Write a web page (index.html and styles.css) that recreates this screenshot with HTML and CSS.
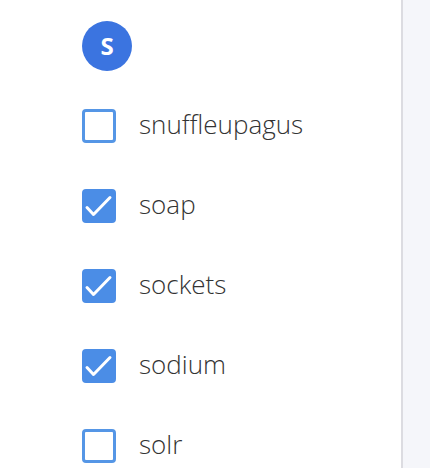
FILE: index.html
```html
<!DOCTYPE html>
<html>
<head>
<meta charset="utf-8">
<link rel="stylesheet" href="styles.css">
</head>
<body>
<div class="page">
  <div class="panel">
    <div class="avatar">S</div>
    <ul class="list">
      <li class="item"><span class="box"></span><span class="label">snuffleupagus</span></li>
      <li class="item"><span class="box checked"><svg viewBox="0 0 34 34" width="34" height="34"><path d="M5 18.5 L11.5 25.5 L28 8.5" fill="none" stroke="#fff" stroke-width="3" stroke-linecap="round" stroke-linejoin="round"/></svg></span><span class="label">soap</span></li>
      <li class="item"><span class="box checked"><svg viewBox="0 0 34 34" width="34" height="34"><path d="M5 18.5 L11.5 25.5 L28 8.5" fill="none" stroke="#fff" stroke-width="3" stroke-linecap="round" stroke-linejoin="round"/></svg></span><span class="label">sockets</span></li>
      <li class="item"><span class="box checked"><svg viewBox="0 0 34 34" width="34" height="34"><path d="M5 18.5 L11.5 25.5 L28 8.5" fill="none" stroke="#fff" stroke-width="3" stroke-linecap="round" stroke-linejoin="round"/></svg></span><span class="label">sodium</span></li>
      <li class="item"><span class="box"></span><span class="label">solr</span></li>
    </ul>
  </div>
  <div class="side"></div>
</div>
</body>
</html>
```
FILE: styles.css
```css
html, body {
  margin: 0;
  padding: 0;
  height: 100%;
  overflow: hidden;
}
body {
  font-family: "Open Sans", "Noto Sans", sans-serif;
  background: #f5f6fa;
}
.page {
  display: flex;
  height: 468px;
}
.panel {
  width: 403px;
  flex: none;
  background: #ffffff;
  border-right: 2px solid #dcdce1;
  padding: 21px 0 0 82px;
  box-sizing: border-box;
}
.side {
  flex: 1;
  background: #f5f6fa;
}
.avatar {
  width: 50px;
  height: 50px;
  border-radius: 50%;
  background: #3b74e0;
  color: #fff;
  font-weight: 700;
  font-size: 24px;
  display: flex;
  align-items: center;
  justify-content: center;
  line-height: 1;
}
.list {
  list-style: none;
  margin: 38px 0 0 0;
  padding: 0;
  display: flex;
  flex-direction: column;
  gap: 46px;
}
.item {
  display: flex;
  align-items: center;
  height: 34px;
}
.box {
  width: 34px;
  height: 34px;
  box-sizing: border-box;
  border: 3px solid #5596e6;
  border-radius: 4px;
  flex: none;
  position: relative;
  background: #fff;
}
.box.checked {
  background: #4b8de6;
  border-color: #4b8de6;
}
.box svg {
  position: absolute;
  left: -3px;
  top: -3px;
}
.label {
  margin-left: 23px;
  font-size: 26px;
  font-weight: 300;
  color: #333;
  line-height: 34px;
  position: relative;
  top: -2px;
}
```
